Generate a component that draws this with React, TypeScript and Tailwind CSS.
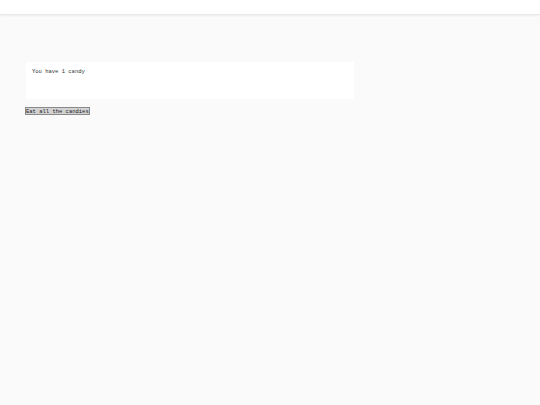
export default function App() {
  return (
    <div className="min-h-[405px] w-full bg-[#fafafa] font-['Liberation_Mono',monospace]">
      <div className="h-[15px] bg-white border-b border-[#e8e8e8] shadow-[0_1px_2px_rgba(0,0,0,0.05)]" />
      <div className="pl-[26px] pt-[47px]">
        <div className="w-[328px] h-[37px] bg-white px-[6px] pt-[6px] text-[5.5px] leading-[7px] text-[#333]">
          You have 1 candy
        </div>
        <button className="block mt-[8px] -ml-px h-[8px] px-0 bg-[#d2d2d2] border border-[#8a8a8a] text-[5.5px] leading-[5px] text-[#222]">
          Eat all the candies
        </button>
      </div>
    </div>
  );
}
